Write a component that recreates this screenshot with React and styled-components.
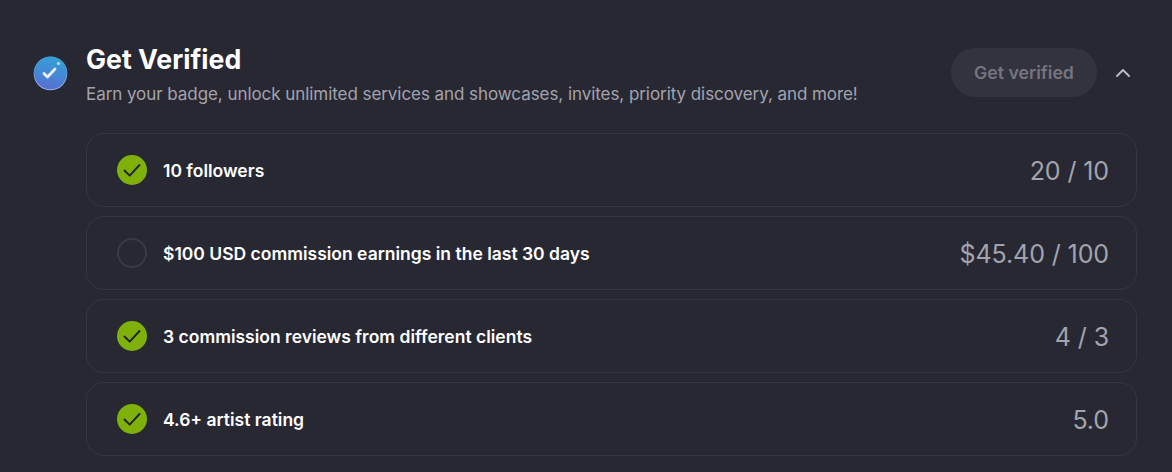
import styled, { createGlobalStyle } from "styled-components";
import { ChevronUp } from "lucide-react";

const requirements = [
    { id: 1, label: "10 followers", progress: "20 / 10", done: true },
    { id: 2, label: "$100 USD commission earnings in the last 30 days", progress: "$45.40 / 100", done: false },
    { id: 3, label: "3 commission reviews from different clients", progress: "4 / 3", done: true },
    { id: 4, label: "4.6+ artist rating", progress: "5.0", done: true },
];

const BadgeIcon = () => (
    <svg width="36" height="36" viewBox="0 0 36 36">
        <defs>
            <linearGradient id="badgeFill" x1="0.6" y1="0" x2="0.4" y2="1">
                <stop offset="0" stopColor="#36a0d6" />
                <stop offset="0.55" stopColor="#4488d6" />
                <stop offset="1" stopColor="#5b6dd0" />
            </linearGradient>
        </defs>
        <circle cx="17.5" cy="18.5" r="16.8" fill="#8fb6ea" />
        <circle cx="17.5" cy="17.8" r="16.4" fill="url(#badgeFill)" />
        <circle cx="25.5" cy="8.5" r="1.6" fill="#a9e2f5" />
        <path d="M11 18.5l3.5 3.5 7.5-8" fill="none" stroke="#eaf1fb" strokeWidth="2.8" strokeLinecap="round" strokeLinejoin="round" />
    </svg>
);

const CheckIcon = () => (
    <svg width="30" height="30" viewBox="0 0 30 30">
        <circle cx="15" cy="15" r="15" fill="#7fb10a" />
        <path d="M7.5 15.5l5.2 5.2L22.5 10" fill="none" stroke="#22222b" strokeWidth="1.9" strokeLinecap="round" strokeLinejoin="round" />
    </svg>
);

const App = () => {
    return (
        <>
            <GlobalStyle />
            <Page>
                <BadgeSlot>
                    <BadgeIcon />
                </BadgeSlot>
                <Content>
                    <Header>
                        <HeaderText>
                            <Title>Get Verified</Title>
                            <Subtitle>Earn your badge, unlock unlimited services and showcases, invites, priority discovery, and more!</Subtitle>
                        </HeaderText>
                        <VerifyButton disabled>Get verified</VerifyButton>
                        <Collapse>
                            <ChevronUp size={24} strokeWidth={2} />
                        </Collapse>
                    </Header>
                    <List>
                        {requirements.map((item) => (
                            <Card key={item.id}>
                                {item.done ? <CheckIcon /> : <EmptyCircle />}
                                <Label>{item.label}</Label>
                                <Progress>{item.progress}</Progress>
                            </Card>
                        ))}
                    </List>
                </Content>
            </Page>
        </>
    );
};

const GlobalStyle = createGlobalStyle`
    html, body {
        margin: 0;
        padding: 0;
        background-color: #282833;
    }
`;

const Page = styled.div`
    display: flex;
    width: 1172px;
    height: 472px;
    box-sizing: border-box;
    padding: 38px 35px 0 33px;
    overflow: hidden;
    background-color: #282833;
    font-family: "Inter", "Liberation Sans", sans-serif;
`;

const BadgeSlot = styled.div`
    flex: none;
    width: 53px;
    padding-top: 17px;
`;

const Content = styled.div`
    flex: 1;
    display: flex;
    flex-direction: column;
    min-width: 0;
`;

const Header = styled.div`
    display: flex;
    align-items: center;
    height: 68px;
    margin-bottom: 27px;
`;

const HeaderText = styled.div`
    flex: 1;
    display: flex;
    flex-direction: column;
    gap: 8px;
    padding-top: 4px;
`;

const Title = styled.h2`
    margin: 0;
    font-size: 26.7px;
    line-height: 32px;
    font-weight: 700;
    color: #ffffff;
`;

const Subtitle = styled.p`
    margin: 0;
    font-size: 17px;
    line-height: 22px;
    font-weight: 400;
    letter-spacing: -0.06px;
    color: #a3a3ad;
`;

const VerifyButton = styled.button`
    width: 146px;
    height: 49px;
    margin: 1px 14px 0 0;
    padding: 0;
    border: none;
    border-radius: 25px;
    background-color: #33333e;
    color: #75757f;
    font-family: inherit;
    font-size: 17.7px;
    font-weight: 600;
`;

const Collapse = styled.div`
    display: flex;
    align-items: center;
    justify-content: center;
    width: 24px;
    margin: 2px 2px 0 0;
    color: #b9b9c2;
`;

const List = styled.div`
    display: flex;
    flex-direction: column;
    gap: 9px;
`;

const Card = styled.div`
    display: flex;
    align-items: center;
    gap: 16px;
    height: 74px;
    box-sizing: border-box;
    padding: 0 27px 0 30px;
    border: 1px solid #363640;
    border-radius: 18px;
`;

const EmptyCircle = styled.div`
    flex: none;
    width: 30px;
    height: 30px;
    box-sizing: border-box;
    border: 2px solid #3a3a45;
    border-radius: 50%;
`;

const Label = styled.span`
    flex: 1;
    padding-top: 1px;
    font-size: 17.5px;
    font-weight: 600;
    color: #ffffff;
`;

const Progress = styled.span`
    padding-top: 2px;
    font-size: 25px;
    font-weight: 400;
    letter-spacing: -0.1px;
    color: #a3a3ad;
`;

export default App;
